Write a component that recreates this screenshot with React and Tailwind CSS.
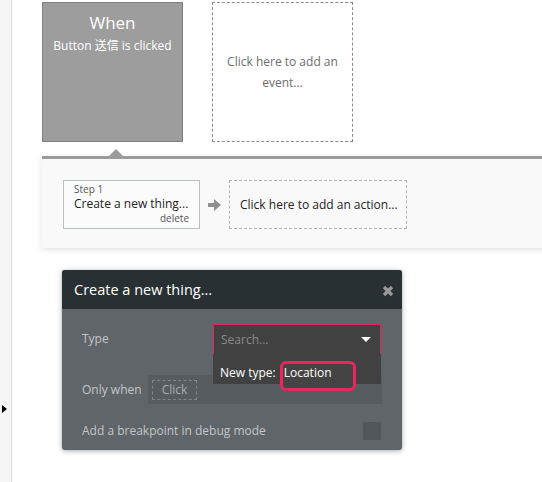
import React from "react";

const font = { fontFamily: '"Open Sans", "Noto Sans CJK JP", sans-serif' };

const App = () => {
    return (
        <div style={font} className="w-[542px] h-[482px] bg-white flex overflow-hidden">
            {/* left strip */}
            <div className="w-[12px] shrink-0 h-full bg-[#f6f6f6] border-r border-[#dcdcdc] flex flex-col">
                <div className="mt-[405px] ml-[2px] w-0 h-0 border-y-[4px] border-y-transparent border-l-[5px] border-l-black" />
            </div>

            <div className="flex-1 pl-[30px] pt-[2px] flex flex-col">
                {/* event boxes */}
                <div className="flex gap-[29px]">
                    <div className="w-[141px] h-[140px] bg-[#9d9d9d] border border-[#7f7f7f] flex flex-col items-center pt-[9px] text-white">
                        <a className="text-[17px] leading-[22px]">When</a>
                        <a className="text-[12px] mt-[3px]">Button 送信 is clicked</a>
                    </div>
                    <div className="w-[141px] h-[140px] border border-dashed border-[#8a8a8a] flex items-center justify-center text-center text-[12px] leading-[21px] text-[#6d6d6d]">
                        Click here to add an<br />event...
                    </div>
                </div>

                {/* actions panel */}
                <div className="relative mt-[14px] w-[520px] h-[92px] bg-[#f9f9f9] border-t-[3px] border-[#9b9b9b] shadow-[0_2px_6px_rgba(0,0,0,0.12)] flex items-start pt-[21px] pl-[21px]">
                    <div className="absolute -top-[10px] left-[67px] w-0 h-0 border-x-[7px] border-x-transparent border-b-[7px] border-b-[#9b9b9b]" />
                    <div className="w-[137px] h-[49px] bg-[#fbfbfb] border border-[#b9c1c5] flex flex-col px-[10px] pt-[2px] text-[#222]">
                        <a className="text-[10px] leading-[13px] text-[#555]">Step 1</a>
                        <a className="text-[12px] leading-[16px]">Create a new thing...</a>
                        <a className="text-[10px] leading-[12px] text-[#555] self-end">delete</a>
                    </div>
                    <div className="w-[29px] h-[49px] flex items-center justify-center">
                        <svg width="13" height="12" viewBox="0 0 13 12">
                            <path d="M0 4h6V0l7 6-7 6V8H0z" fill="#8f8f8f" />
                        </svg>
                    </div>
                    <div className="w-[178px] h-[49px] border border-dashed border-[#b5b5b5] flex items-center pl-[10px] text-[12px] text-[#222]">
                        Click here to add an action...
                    </div>
                </div>

                {/* dialog */}
                <div className="mt-[22px] ml-[20px] w-[340px] rounded-[3px] overflow-visible shadow-[0_1px_5px_rgba(0,0,0,0.35)] bg-[#5f6569]">
                    <div className="h-[39px] bg-[#293033] rounded-t-[3px] flex items-center justify-between pl-[12px] pr-[8px]">
                        <a className="text-[14.5px] text-white">Create a new thing...</a>
                        <svg width="12" height="12" viewBox="0 0 12 12" className="mt-[2px]">
                            <path d="M2 2L10 10M10 2L2 10" stroke="#9a9a9a" strokeWidth="3.2" />
                        </svg>
                    </div>
                    <div className="flex flex-col pt-[15px] pb-[10px] pl-[20px] pr-[21px] text-[12px] text-[#c3c6c8]">
                        <div className="flex items-center h-[30px]">
                            <a className="w-[131px]">Type</a>
                            <div className="relative flex-1 h-[30px]">
                                <div className="h-[30px] bg-[#414141] border-x border-t border-[#e6245c] flex items-center justify-between pl-[7px] pr-[9px]">
                                    <a className="text-[#8a8a8a]">Search...</a>
                                    <div className="w-0 h-0 border-x-[5px] border-x-transparent border-t-[5px] border-t-white" />
                                </div>
                                <div className="absolute top-[30px] left-0 w-full h-[30px] bg-[#414141] flex items-start pt-[7px] pl-[7px] z-10">
                                    <a className="text-white text-[12px] leading-[14px] mt-[5px]">New type:</a>
                                    <div className="ml-[4px] w-[76px] h-[30px] shrink-0 border-[3px] border-[#e8275c] rounded-[6px] bg-[#444] flex items-start pl-[1px] pt-[2px]">
                                        <a className="text-white text-[12px] leading-[14px]">Location</a>
                                    </div>
                                </div>
                            </div>
                        </div>
                        <div className="flex items-center h-[29px] mt-[21px]">
                            <a className="w-[66px]">Only when</a>
                            <div className="flex-1 h-[29px] bg-[#575c60] flex items-center pl-[4px] -mr-[1px]">
                                <div className="w-[45px] h-[20px] border border-dashed border-[#80868a] flex items-center justify-center text-[#a9adb0]">Click</div>
                            </div>
                        </div>
                        <div className="flex items-center justify-between h-[18px] mt-[18px]">
                            <a>Add a breakpoint in debug mode</a>
                            <div className="w-[18px] h-[18px] rounded-[2px] bg-[#50565a]" />
                        </div>
                    </div>
                </div>
            </div>
        </div>
    );
};

export default App;
